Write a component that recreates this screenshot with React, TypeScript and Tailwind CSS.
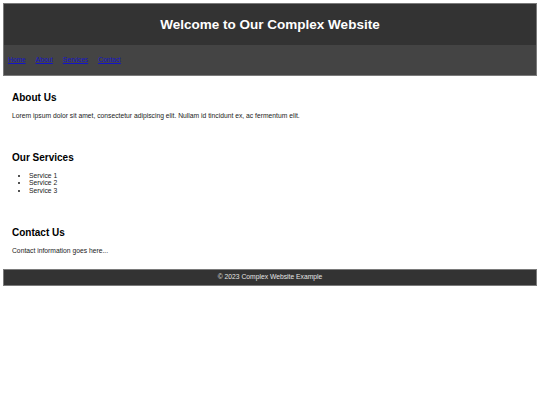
export default function App() {
  const links = ["Home", "About", "Services", "Contact"];
  return (
    <div className="min-h-screen bg-white p-[3px] font-['Liberation_Sans',Arial,sans-serif] text-black">
      <div className="border border-[#7a7a7a]">
        <header className="h-[41px] bg-[#333333] flex items-center justify-center">
          <h1 className="text-[13.5px] leading-none font-bold text-white">Welcome to Our Complex Website</h1>
        </header>
        <nav className="h-[30px] bg-[#444444] flex items-center gap-[10px] px-[4px]">
          {links.map((l) => (
            <a key={l} href="#" className="text-[6.6px] leading-none text-[#1414c8] underline">
              {l}
            </a>
          ))}
        </nav>
      </div>
      <main className="px-[9px]">
        <section className="pt-[16px]">
          <h2 className="text-[10px] leading-[12px] font-bold">About Us</h2>
          <p className="mt-[8px] text-[6.75px] leading-[7.5px] text-[#1a1a1a]">
            Lorem ipsum dolor sit amet, consectetur adipiscing elit. Nullam id tincidunt ex, ac fermentum elit.
          </p>
        </section>
        <section className="pt-[32px]">
          <h2 className="text-[10px] leading-[12px] font-bold">Our Services</h2>
          <ul className="mt-[8px] list-disc pl-[17px] text-[6.75px] leading-[7.5px] text-[#1a1a1a]">
            <li>Service 1</li>
            <li>Service 2</li>
            <li>Service 3</li>
          </ul>
        </section>
        <section className="pt-[33px]">
          <h2 className="text-[10px] leading-[12px] font-bold">Contact Us</h2>
          <p className="mt-[8px] text-[6.75px] leading-[7.5px] text-[#1a1a1a]">Contact information goes here...</p>
        </section>
      </main>
      <footer className="mt-[14px] h-[17px] border border-[#7a7a7a] bg-[#333333] flex items-center justify-center">
        <p className="text-[6.75px] leading-none text-[#e5e5e5]">© 2023 Complex Website Example</p>
      </footer>
    </div>
  );
}
